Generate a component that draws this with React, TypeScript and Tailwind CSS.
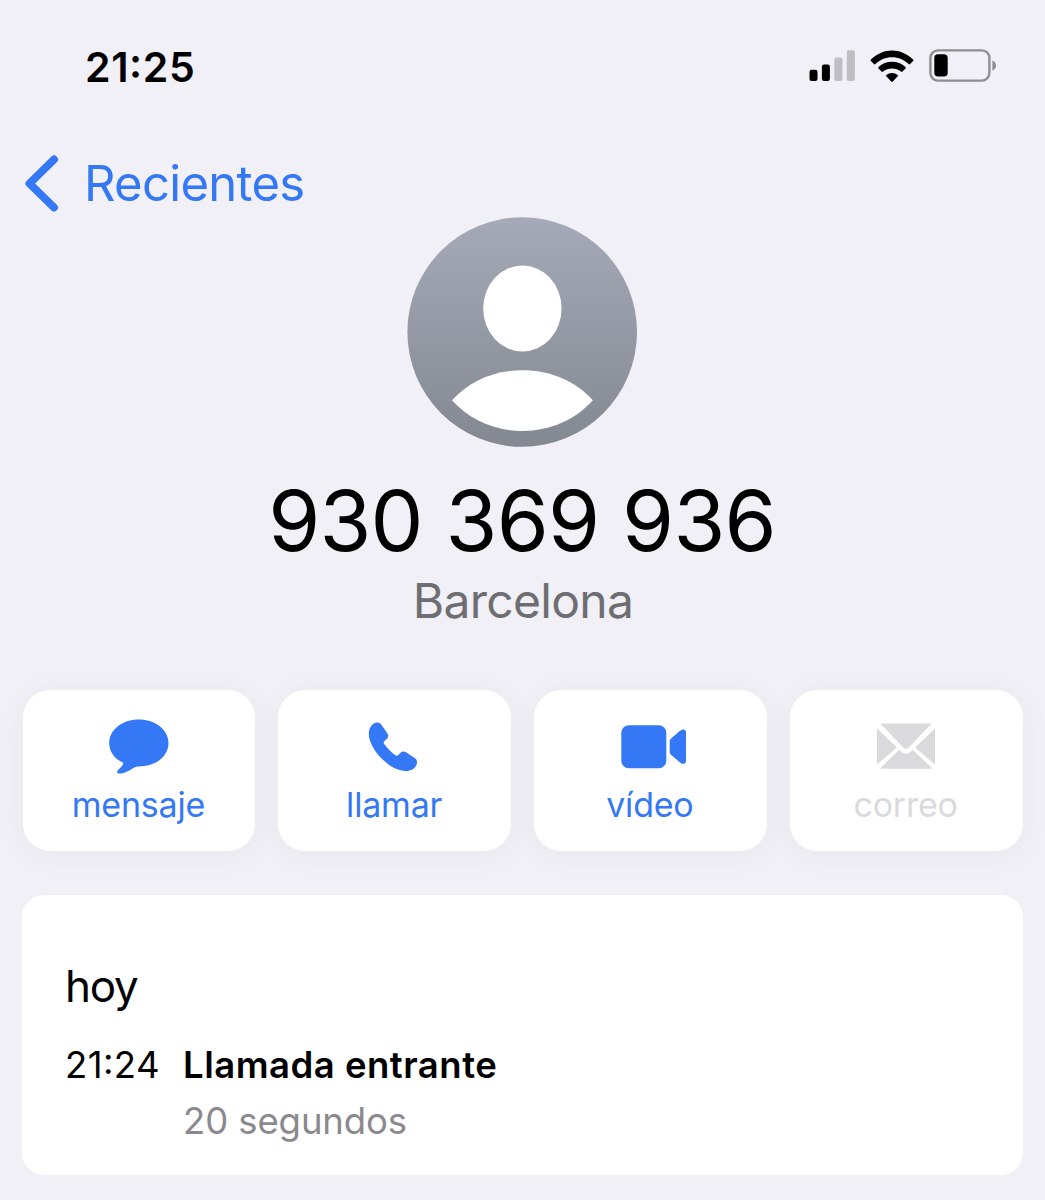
import type { ReactNode } from "react";
import { clsx } from "clsx";

interface ActionButtonProps {
  label: string;
  icon: ReactNode;
  disabled?: boolean;
}

const SignalIcon = () => (
  <svg width="46" height="31" viewBox="0 0 46 31">
    <rect x="0.5" y="19.7" width="8" height="11.3" rx="2.2" fill="#000" />
    <rect x="12.9" y="14.5" width="8" height="16.5" rx="2.2" fill="#000" />
    <rect x="25.3" y="7.5" width="8.2" height="23.5" rx="2.2" fill="#bfbfc3" />
    <rect x="37.7" y="0.3" width="8.2" height="30.7" rx="2.2" fill="#bfbfc3" />
  </svg>
);

const WifiIcon = () => (
  <svg width="44" height="32" viewBox="0 0 44 32">
    <path d="M.9 9.6C6.8 3.7 14 .4 22 .4s15.200 3.300 21.100 9.200c.5.5.5 1 0 1.500l-3 3c-.5.5-1 .5-1.500 0C34 9.800 28.500 7.300 22 7.300S10 9.800 5.400 14.100c-.5.5-1 .5-1.500 0l-3-3c-.5-.5-.5-1 0-1.500z" />
    <path d="M8.500 17.100C12.200 13.500 16.900 11.700 22 11.700s9.800 1.800 13.500 5.400c.5.5.5 1 0 1.500l-3 3c-.5.5-1 .5-1.500 0C28.400 19.500 25.300 18.400 22 18.400s-6.400 1.100-9 3.200c-.5.5-1 .5-1.500 0l-3-3c-.5-.5-.5-1 0-1.500z" />
    <path d="M16.300 24.900c1.600-1.300 3.600-2 5.700-2s4.100.7 5.700 2c.4.400.4 1 0 1.400l-4.900 5.200c-.5.5-1.100.5-1.600 0l-4.900-5.200c-.4-.4-.4-1 0-1.400z" />
  </svg>
);

const BatteryIcon = () => (
  <svg width="68" height="33" viewBox="0 0 68 33">
    <rect x="1.4" y="1.4" width="59" height="30.2" rx="7.5" fill="none" stroke="#8e8e92" strokeWidth="2.4" />
    <rect x="5.3" y="5.2" width="13.4" height="22.4" rx="3.8" fill="#000" />
    <path d="M63.400 11.500c2.300.8 3.600 2.700 3.600 5s-1.300 4.200-3.600 5z" fill="#8e8e92" />
  </svg>
);

const Avatar = () => (
  <svg width="230" height="230" viewBox="0 0 230 230">
    <defs>
      <linearGradient id="avatar-fill" x1="0" y1="0" x2="0" y2="1">
        <stop offset="0" stopColor="#a6aab8" />
        <stop offset="1" stopColor="#848891" />
      </linearGradient>
    </defs>
    <circle cx="115.2" cy="115" r="114.8" fill="url(#avatar-fill)" />
    <ellipse cx="115.4" cy="91.5" rx="39.200" ry="43" fill="#fff" />
    <path d="M45 183.300C62.400 164 87.400 153.300 115.400 153.300s53 10.700 70.500 30C168.400 202.500 143.400 214 115.400 214s-53-11.500-70.400-30.700z" fill="#fff" />
  </svg>
);

const MessageIcon = () => (
  <svg width="60" height="55" viewBox="0 0 60 55" fill="currentColor">
    <path d="M29.800.5C46.400.5 59.500 10.700 59.500 24S47 47.400 30 47.400c-1.700 0-3.200.2-4.600 1C20.500 51.200 15.500 54.500 10.600 54.500c-2.600 0-3.200-1.700-1.600-3.400 2.200-2.300 4.500-4.200 5.200-6.200.2-.6.100-1-.5-1.400C5 39.500.2 32.300.2 24 .2 10.700 13.400.5 29.800.5z" />
  </svg>
);

const PhoneIcon = () => (
  <svg width="50" height="50" viewBox="0 0 50 50" fill="currentColor" className="mr-[4px]">
    <path d="M7.800.8c2.200-.6 4.400.2 5.800 2.100l5.800 8.600c1.200 1.900 1 3.700-.4 5.200l-2.700 2.500c-.8.900-.8 1.700-.1 2.800 2.600 3.900 7.300 8.600 11.300 11.200 1.100.7 1.900.7 2.800-.1l2.500-2.500c1.600-1.400 3.300-1.500 5.200-.3l8.700 5.800c2.200 1.500 2.800 3.500 2.100 5.900-1.300 4.500-5.700 7-11.100 7-8 0-16.500-5-23.600-12C6.700 29.600.8 20.300.8 12 .8 6.600 3.300 2 7.800.8z" />
  </svg>
);

const VideoIcon = () => (
  <svg width="66" height="44" viewBox="0 0 66 44" fill="currentColor" className="ml-[7px]">
    <rect x="0.3" y="0.3" width="45" height="43" rx="7.5" />
    <path d="M48.700 16.500c0-1.300.4-2.200 1.400-3.100L58.700 6c2.900-2.600 6.300-2 6.300 1.400v28.400c0 3.400-3.400 4-6.300 1.400l-8.600-7.400c-1-.9-1.400-1.800-1.400-3.100z" />
  </svg>
);

const MailIcon = () => (
  <svg width="60" height="47" viewBox="0 0 60 47" fill="currentColor">
    <path d="M4.500.8C5.300.5 6 .5 7 .5h46c1 0 1.700 0 2.500.3L33.700 23.500c-3 2.900-4.500 2.900-7.500 0z" />
    <path d="M1 5.500 20.800 24.500 1 41.500z" />
    <path d="M59 5.500 39 24.500 59 41.500z" />
    <path d="M23.200 26.800 25 28.500c3.300 3 6.400 3 9.700 0l1.800-1.700L56.300 45.300c-1 .4-2 .5-3.300.5H7.500c-1.500 0-2.500-.1-3.300-.5z" />
  </svg>
);

const ActionButton = ({ label, icon, disabled = false }: ActionButtonProps) => (
  <button
    type="button"
    disabled={disabled}
    className={clsx(
      "flex h-[161px] flex-col items-center rounded-[27px] bg-white pt-[26px] shadow-[0_4px_30px_rgba(60,60,90,0.05)]",
      disabled ? "text-[#dadadc]" : "text-[#3478f6]"
    )}
  >
    <span className="flex h-[61px] items-center justify-center">{icon}</span>
    <span className="mt-[8px] mr-[1px] text-[34px] leading-[39px] tracking-[-0.2px]">{label}</span>
  </button>
);

const App = () => {
  return (
    <div className="min-h-[1200px] w-[1045px] bg-[#f1f0f6] font-['Inter',sans-serif] text-black">
      {/* Status bar */}
      <header className="flex h-[134px] items-center justify-between pr-[48px] pl-[85px]">
        <span className="text-[41px] leading-[60px] font-semibold tracking-[0.6px] [font-feature-settings:'case']">
          21:25
        </span>
        <div className="flex items-center gap-[15px] pb-[3px]">
          <SignalIcon />
          <WifiIcon />
          <BatteryIcon />
        </div>
      </header>

      <nav className="flex h-[83px] items-start pt-[20px] pl-[24px]">
        <a href="#" className="flex items-center gap-[25px] text-[#3478f6]">
          <svg width="35" height="59" viewBox="0 0 35 59" fill="none">
            <path d="M30 5.500 5.500 29.500 30 53.500" stroke="currentColor" strokeWidth="8" strokeLinecap="round" strokeLinejoin="round" />
          </svg>
          <span className="text-[49px] leading-[59px] tracking-[-0.7px]">Recientes</span>
        </a>
      </nav>

      <section className="flex w-[1044px] flex-col items-center">
        <Avatar />
        <h1 className="mt-[23px] text-[84px] leading-[101px] tracking-[-0.8px]">930 369 936</h1>
        <p className="pl-[2px] text-[48px] leading-[60px] tracking-[-0.7px] text-[#6e6e72]">Barcelona</p>
      </section>

      <section className="mt-[59px] grid grid-cols-4 gap-[23px] px-[22.5px]">
        <ActionButton label="mensaje" icon={<MessageIcon />} />
        <ActionButton label="llamar" icon={<PhoneIcon />} />
        <ActionButton label="vídeo" icon={<VideoIcon />} />
        <ActionButton label="correo" icon={<MailIcon />} disabled />
      </section>

      <section className="mx-[22px] mt-[44px] h-[280px] rounded-[22px] bg-white px-[43px] pt-[61px]">
        <h2 className="text-[44px] leading-[60px] tracking-[-1.3px]">hoy</h2>
        <div className="mt-[21px] flex text-[36.5px] leading-[56px]">
          <time className="w-[118px] tracking-[0.4px] [font-feature-settings:'case']">21:24</time>
          <div>
            <p className="font-semibold tracking-[0.5px]">Llamada entrante</p>
            <p className="tracking-[-0.1px] text-[#8a8a8e]">20 segundos</p>
          </div>
        </div>
      </section>
    </div>
  );
};

export default App;
